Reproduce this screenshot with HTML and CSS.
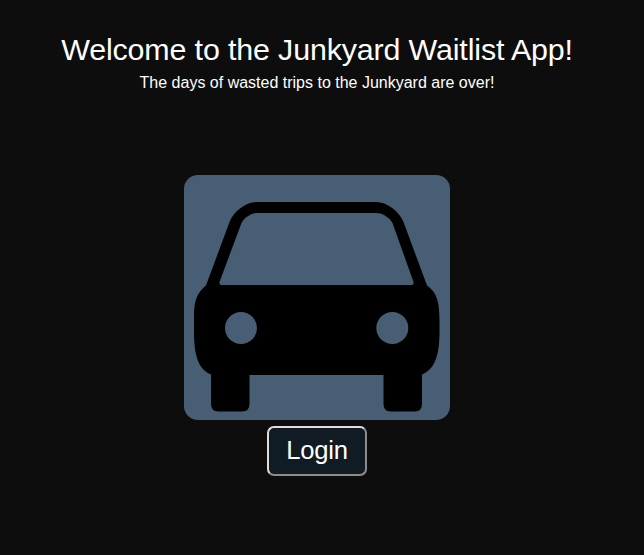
FILE: index.html
```html
<!DOCTYPE html>
<html lang="en">
<head>
<meta charset="utf-8">
<title>Junkyard Waitlist App</title>
<link rel="stylesheet" href="styles.css">
</head>
<body>
<main class="welcome">
  <h1 class="title">Welcome to the Junkyard Waitlist App!</h1>
  <p class="tagline">The days of wasted trips to the Junkyard are over!</p>
  <svg class="car" viewBox="184 175 266 245" role="img" aria-label="Car">
    <path fill-rule="evenodd" d="M206 285.500L229.500 222C234 211 246 202 257 202H376C387 202 399 211 403.500 222L427 285.500C436 292 439.500 300 439.500 320V332C439.500 357 434 369.500 422 374.500V404Q422 411.500 414.500 411.500H391Q383.500 411.500 383.500 404V375H249.500V404Q249.500 411.500 242 411.500H218.500Q211 411.500 211 404V374.500C199 369.500 194 357 194 332V317C194 300 197 293 206 285.500ZM219.500 282L241.500 223C244 218 251 213 257 213H376C383 213 390 218 392.500 223L413.500 282Q414 285 411.500 285H221.500Q219 285 219.500 282Z"/>
    <circle class="lamp" cx="241" cy="328" r="16"/>
    <circle class="lamp" cx="392.300" cy="328" r="16"/>
  </svg>
  <button class="login" type="button">Login</button>
</main>
</body>
</html>
```

FILE: styles.css
```css
body {
  margin: 0;
  background: #0d0d0d;
  color: #fff;
  font-family: Arial, "Liberation Sans", sans-serif;
}

.welcome {
  display: flex;
  flex-direction: column;
  align-items: center;
  width: 634px;
  padding-top: 31px;
}

.title {
  margin: 0;
  font-size: 30.4px;
  font-weight: 400;
  letter-spacing: -0.14px;
  line-height: 36px;
  white-space: nowrap;
}

.tagline {
  margin: 7px 0 0;
  font-size: 16px;
  line-height: 18px;
}

.car {
  display: block;
  width: 266px;
  height: 245px;
  margin-top: 83px;
  border-radius: 14px;
  background: #475e74;
}

.lamp {
  fill: #475e74;
}

.login {
  box-sizing: border-box;
  width: 100px;
  height: 50px;
  margin-top: 6px;
  padding: 0 0 2px;
  border: 2px solid;
  border-color: #dedede #8c8c8c #8c8c8c #dedede;
  border-radius: 7px;
  background: #111b24;
  color: #fff;
  font-family: inherit;
  font-size: 25.6px;
  letter-spacing: -0.2px;
}
```
